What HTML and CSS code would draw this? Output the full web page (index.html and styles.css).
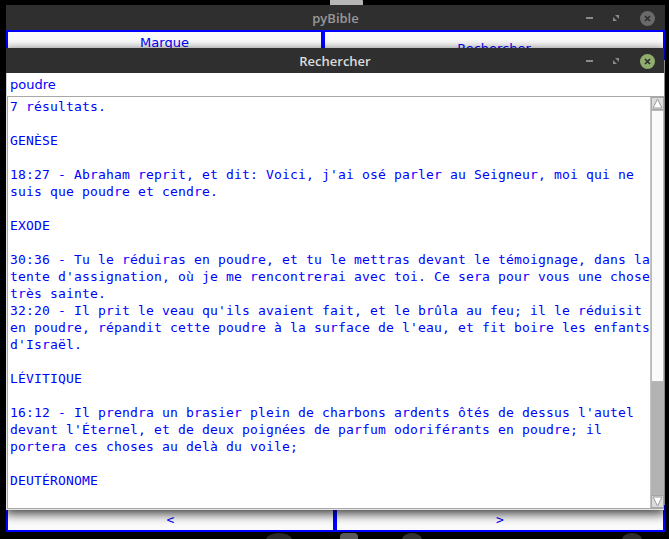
FILE: index.html
```html
<!DOCTYPE html>
<html lang="fr">
<head>
<meta charset="utf-8">
<title>pyBible</title>
<link rel="stylesheet" href="styles.css">
</head>
<body>
<div class="desk-shape top-shape"></div>
<div class="desk-shape blob b1"></div>
<div class="desk-shape blob b2"></div>
<div class="desk-shape blob b3"></div>
<div class="desk-shape blob b4"></div>

<div class="window main">
  <div class="titlebar">
    <span></span>
    <span class="title inactive">pyBible</span>
    <div class="controls">
      <span class="ctl-min"></span>
      <svg class="ctl-max" width="6" height="6" viewBox="0 0 6 6"><polygon points="2,0 6,0 6,4" fill="#8a8a8a"/><polygon points="0,2 0,6 4,6" fill="#8a8a8a"/></svg>
      <svg class="ctl-close" width="15" height="15" viewBox="0 0 15 15"><circle cx="7.5" cy="7.5" r="7.5" fill="#6a6a6a"/><path d="M5 5 L10 10 M10 5 L5 10" stroke="#2e2e2e" stroke-width="1.7"/></svg>
    </div>
  </div>
  <div class="btn-row top-row">
    <div class="tkbtn marque">Marque</div>
    <div class="tkbtn rech">Rechercher</div>
  </div>
  <div class="body-fill"></div>
  <div class="btn-row bottom-row">
    <div class="tkbtn nav">&lt;</div>
    <div class="tkbtn nav">&gt;</div>
  </div>
</div>

<div class="window dialog">
  <div class="titlebar">
    <span></span>
    <span class="title active">Rechercher</span>
    <div class="controls">
      <span class="ctl-min"></span>
      <svg class="ctl-max" width="6" height="6" viewBox="0 0 6 6"><polygon points="2,0 6,0 6,4" fill="#8a8a8a"/><polygon points="0,2 0,6 4,6" fill="#8a8a8a"/></svg>
      <svg class="ctl-close" width="15" height="15" viewBox="0 0 15 15"><circle cx="7.5" cy="7.5" r="7.5" fill="#8fae6d"/><path d="M5 5 L10 10 M10 5 L5 10" stroke="#2e2e2e" stroke-width="1.7"/></svg>
    </div>
  </div>
  <div class="entry">poudre</div>
  <div class="textbox">
    <pre class="results">7 résultats.

GENÈSE

18:27 - Abraham reprit, et dit: Voici, j'ai osé parler au Seigneur, moi qui ne
suis que poudre et cendre.

EXODE

30:36 - Tu le réduiras en poudre, et tu le mettras devant le témoignage, dans la
tente d'assignation, où je me rencontrerai avec toi. Ce sera pour vous une chose
très sainte.
32:20 - Il prit le veau qu'ils avaient fait, et le brûla au feu; il le réduisit
en poudre, répandit cette poudre à la surface de l'eau, et fit boire les enfants
d'Israël.

LÉVITIQUE

16:12 - Il prendra un brasier plein de charbons ardents ôtés de dessus l'autel
devant l'Éternel, et de deux poignées de parfum odoriférants en poudre; il
portera ces choses au delà du voile;

DEUTÉRONOME
</pre>
    <div class="scrollbar">
      <div class="arrow up"><svg width="11" height="11" viewBox="0 0 11 11"><polygon points="5.5,1 10,10 1,10" fill="#fff" stroke="#9a9a9a" stroke-width="1"/></svg></div>
      <div class="slider"></div>
      <div class="trough"></div>
      <div class="arrow down"><svg width="11" height="11" viewBox="0 0 11 11"><polygon points="1,1 10,1 5.5,10" fill="#fff" stroke="#9a9a9a" stroke-width="1"/></svg></div>
    </div>
  </div>
</div>
</body>
</html>
```
FILE: styles.css
```css
html, body {
  margin: 0;
  padding: 0;
}
body {
  width: 669px;
  height: 539px;
  background: #000;
  position: relative;
  overflow: hidden;
  font-family: "DejaVu Sans", sans-serif;
}

.desk-shape {
  position: absolute;
}
.top-shape {
  left: 330px;
  top: -4px;
  width: 33px;
  height: 10px;
  background: #b6b6b6;
  border-radius: 0 6px 0 0;
}
.blob {
  background: #3a3a3a;
  border-radius: 50%;
  top: 533px;
  height: 14px;
}
.b1 { left: 266px; width: 26px; background: #2a2a2a; }
.b2 { left: 340px; width: 18px; background: #5a5a5a; border-radius: 4px; }
.b3 { left: 402px; width: 20px; background: #333; }
.b4 { left: 622px; width: 20px; background: #2e2e2e; }

.window {
  position: absolute;
  display: flex;
  flex-direction: column;
}

.main {
  left: 6px;
  top: 5px;
  width: 659px;
  height: 527px;
  background: #e6e6e6;
}

.dialog {
  left: 6px;
  top: 48px;
  width: 658px;
  height: 462px;
  background: #e4e4e4;
  box-shadow: 0 3px 10px 1px rgba(0, 0, 0, 0.75);
}

.titlebar {
  height: 25px;
  flex: none;
  background: #2f2f2f;
  display: grid;
  grid-template-columns: 1fr auto 1fr;
  align-items: center;
}
.title {
  font-family: "Open Sans", sans-serif;
  font-weight: 600;
  font-size: 13px;
  line-height: 25px;
  padding-top: 1px;
}
.title.inactive { color: #989898; }
.title.active { color: #dcdcdc; }

.controls {
  display: flex;
  align-items: center;
  justify-content: flex-end;
  padding-right: 9px;
}
.main .controls { padding-right: 10px; }
.ctl-min {
  width: 7px;
  height: 2px;
  background: #8a8a8a;
  margin-right: 20px;
}
.ctl-max {
  display: block;
  margin-right: 21px;
}
.ctl-close {
  display: block;
}

.btn-row {
  display: grid;
  flex: none;
}
.top-row {
  grid-template-columns: 317px 1fr;
  height: 30px;
}
.bottom-row {
  grid-template-columns: 329px 1fr;
  height: 27px;
}
.tkbtn {
  background: #fbfbfb;
  border: 2px solid #0000ff;
  color: #0000ff;
  font-size: 13px;
  line-height: 15px;
  text-align: center;
}
.marque { padding-top: 3px; }
.rech { padding-top: 9px; }
.nav {
  display: flex;
  align-items: flex-end;
  justify-content: center;
  padding-bottom: 3px;
  font-family: "DejaVu Sans Mono", monospace;
}
.body-fill {
  flex: 1;
  background: #e6e6e6;
}

.entry {
  height: 23px;
  flex: none;
  background: #fff;
  border-left: 1px solid #d0d0d0;
  color: #0000ff;
  font-size: 13px;
  line-height: 23px;
  padding-left: 3px;
  box-sizing: border-box;
}

.textbox {
  height: 413px;
  margin-left: 1px;
  flex: none;
  display: flex;
  border: 1px solid #a8a8a8;
  border-right: none;
  background: #fff;
  box-sizing: border-box;
}
.results {
  flex: 1;
  margin: 0;
  padding: 1px 0 0 2px;
  font-family: "DejaVu Sans Mono", monospace;
  font-size: 13px;
  letter-spacing: 0.174px;
  line-height: 17px;
  color: #0000ff;
  overflow: hidden;
  white-space: pre;
}

.scrollbar {
  width: 13px;
  flex: none;
  display: flex;
  flex-direction: column;
  background: #b3b3b3;
  border-left: 1px solid #c4c4c4;
}
.arrow {
  height: 13px;
  flex: none;
  background: #dcdcdc;
  border: 1px solid #a6a6a6;
  box-sizing: border-box;
  display: flex;
  align-items: center;
  justify-content: center;
}
.arrow svg { display: block; }
.slider {
  height: 272px;
  flex: none;
  background: #fafafa;
  border: 1px solid #b8b8b8;
  box-sizing: border-box;
}
.trough {
  flex: 1;
  background: #b3b3b3;
}
```
